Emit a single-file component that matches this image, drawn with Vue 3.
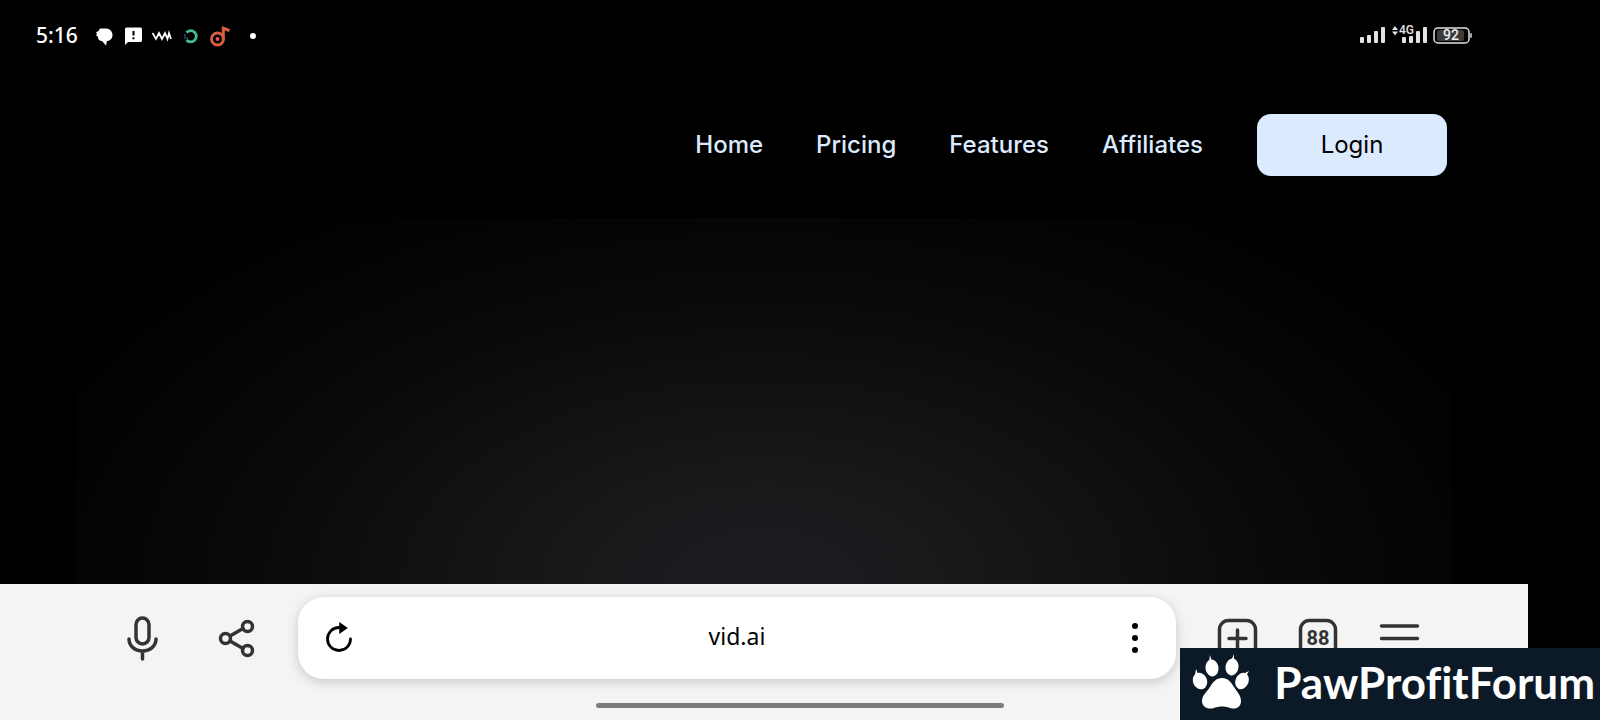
<template>
    <div class="page">
        <div class="status">
            <div class="status-left">
                <span class="clock">5:16</span>
                <svg width="20" height="22" viewBox="0 0 20 22">
                    <path d="M6 3.500h6c4 0 6.500 3 6.500 6.500 0 3.500-2.500 6-5.500 6l-1 4.500-4-4.500c-3 0-4-2-4-4l-2-2 1-1-1-2 2-.5z" fill="#fff" />
                </svg>
                <svg width="20" height="22" viewBox="0 0 20 22">
                    <path d="M3.500 2.500h14q1.500 0 1.500 1.500v11.500q0 1.500-1.500 1.500H5l-3 3V4Q2 2.500 3.500 2.500z" fill="#fff" />
                    <path d="M10.500 6v4.500M10.500 12.200v2" stroke="#111" stroke-width="2.200" />
                </svg>
                <svg width="20" height="22" viewBox="0 0 20 22">
                    <path d="M.5 8l3.500 6L7 8l3 6 3-6 2.500 6L17 8l2 6" fill="none" stroke="#fff" stroke-width="1.700" />
                </svg>
                <svg width="20" height="22" viewBox="0 0 20 22">
                    <path d="M5.500 7.500A5.600 5.600 0 1 1 5.500 15" fill="none" stroke="#44b994" stroke-width="2.800" />
                    <path d="M4 9v4h3" fill="none" stroke="#1b2f55" stroke-width="2" />
                </svg>
                <svg width="20" height="22" viewBox="0 0 20 22">
                    <circle cx="7.500" cy="14" r="6" fill="none" stroke="#d95f43" stroke-width="2.800" />
                    <circle cx="7.500" cy="14" r="2" fill="#d95f43" />
                    <path d="M13.300 15V2" fill="none" stroke="#d95f43" stroke-width="3" />
                    <path d="M12 1l5 2 3 1-1 3-3-1-4-1z" fill="#d95f43" />
                </svg>
                <svg width="20" height="22" viewBox="0 0 20 22">
                    <circle cx="14" cy="11" r="3" fill="#fff" />
                </svg>
            </div>
            <div class="status-right">
                <svg width="26" height="22" viewBox="0 0 26 22">
                    <g fill="#e2e2e2">
                        <rect v-for="(h, i) in bars" :key="i" :x="1 + i * 7" :y="18 - h" width="4" :height="h" rx="1" />
                    </g>
                </svg>
                <svg width="36" height="26" viewBox="0 0 36 26">
                    <g fill="#e2e2e2">
                        <path d="M1 7l3-4 3 4zM1 8.500l3 4 3-4z" />
                        <rect v-for="(h, i) in bars4g" :key="i" :x="11 + i * 7" :y="20 - h" width="4" :height="h" rx="1" />
                        <text x="8" y="11" class="net">4G</text>
                    </g>
                </svg>
                <svg width="39" height="22" viewBox="0 0 39 22">
                    <rect x="1" y="3" width="35" height="15" rx="4" fill="none" stroke="#e2e2e2" stroke-width="1.500" />
                    <rect x="4" y="5" width="27" height="11" rx="2" fill="#3b3b3b" />
                    <rect x="37" y="8" width="2" height="5" rx="1" fill="#aaa" />
                    <text x="18" y="15" text-anchor="middle" class="charge">92</text>
                </svg>
            </div>
        </div>

        <header class="header">
            <nav class="nav">
                <a v-for="link in links" :key="link" href="#">{{ link }}</a>
            </nav>
            <button type="button" class="login">Login</button>
        </header>

        <main class="hero"></main>

        <div class="toolbar">
            <div class="group left">
                <button type="button" class="icon" aria-label="Voice search">
                    <svg width="48" height="48" viewBox="0 0 48 48">
                        <rect x="18" y="4" width="13" height="26" rx="6.500" />
                        <path d="M11 25c0 7 6 12 13.500 12S38 32 38 25M24.500 37v8" />
                    </svg>
                </button>
                <button type="button" class="icon" aria-label="Share">
                    <svg width="48" height="48" viewBox="0 0 48 48">
                        <circle cx="12.500" cy="24.500" r="5" />
                        <circle cx="34.500" cy="12.500" r="5" />
                        <circle cx="34.500" cy="36.500" r="5" />
                        <path d="M17 22l13-7.500M17 27l13 7.500" />
                    </svg>
                </button>
            </div>
            <div class="address">
                <button type="button" class="icon dark" aria-label="Reload">
                    <svg width="48" height="48" viewBox="0 0 48 48">
                        <path d="M24 13.500A11.500 11.500 0 1 0 35.500 25" stroke-width="2.800" />
                        <path d="M25 9.500v9l6.500-4.500z" class="solid" stroke-width="1.500" />
                    </svg>
                </button>
                <input v-model="url" type="text" aria-label="Address" />
                <button type="button" class="icon dark" aria-label="More">
                    <svg width="48" height="48" viewBox="0 0 48 48">
                        <circle v-for="y in [12, 24, 36]" :key="y" cx="24" :cy="y" r="3" class="dot" />
                    </svg>
                </button>
            </div>
            <div class="group right">
                <button type="button" class="icon" aria-label="New tab">
                    <svg width="48" height="48" viewBox="0 0 48 48">
                        <rect x="6.500" y="6.500" width="36" height="37" rx="9" />
                        <path d="M24.500 16v18M16 24.500h17" />
                    </svg>
                </button>
                <button type="button" class="icon" aria-label="Tabs">
                    <svg width="48" height="48" viewBox="0 0 48 48">
                        <rect x="6.500" y="6.500" width="35" height="37" rx="9" />
                        <text x="24" y="31" text-anchor="middle" class="count">88</text>
                    </svg>
                </button>
                <button type="button" class="icon" aria-label="Menu">
                    <svg width="48" height="48" viewBox="0 0 48 48">
                        <path d="M6.500 12h36M6.500 24.500h36M6.500 37h36" />
                    </svg>
                </button>
            </div>
        </div>

        <div class="handle"></div>

        <div class="brand">
            <svg width="58" height="56" viewBox="0 0 58 56">
                <g fill="#fff">
                    <ellipse cx="8" cy="27" rx="7" ry="8.500" transform="rotate(-20 8 27)" />
                    <ellipse cx="20" cy="14" rx="6.500" ry="8.500" transform="rotate(-8 20 14)" />
                    <ellipse cx="40" cy="13" rx="6.500" ry="8.500" transform="rotate(8 40 13)" />
                    <ellipse cx="50" cy="27" rx="6.500" ry="8.500" transform="rotate(22 50 27)" />
                    <path d="M3 21l1-6 2 5zM17 8l1-7 2 7zM39 7l3-7 0 8zM51 20l6-3-3 5z" />
                    <path d="M30 24c6 0 9 4 12 9s7 8 7 14c0 6-5 9-11 7-5-2-11-2-16 0-6 2-12-1-12-7 0-6 5-9 8-14s6-9 12-9z" />
                </g>
            </svg>
            <span>PawProfitForum</span>
        </div>
    </div>
</template>

<script setup>
import { ref } from 'vue';

const links = ['Home', 'Pricing', 'Features', 'Affiliates'];
const bars = [6, 8, 12, 16];
const bars4g = [6, 7, 12, 16];
const url = ref('vid.ai');
</script>

<style>
body {
    margin: 0;
    background: #000;
}
</style>

<style scoped>
.page {
    position: relative;
    display: flex;
    flex-direction: column;
    box-sizing: border-box;
    min-height: 100vh;
    padding-right: 72px;
    background: #000;
    font-family: Inter, 'Liberation Sans', sans-serif;
    overflow: hidden;
}

svg {
    display: block;
}

.status {
    display: flex;
    justify-content: space-between;
    align-items: center;
    height: 72px;
    padding: 0 56px 0 36px;
}

.status-left {
    display: flex;
    align-items: center;
    gap: 9px;
}

.clock {
    width: 49px;
    padding-bottom: 2px;
    color: #fff;
    font: 500 21px/28px 'Noto Sans', sans-serif;
}

.status-right {
    display: flex;
    align-items: center;
    gap: 6px;
}

.net {
    font: 500 12px Roboto, sans-serif;
    stroke: #000;
    stroke-width: 2px;
    paint-order: stroke;
}

.charge {
    fill: #eee;
    font: 500 14px Roboto, sans-serif;
}

.header {
    display: flex;
    justify-content: flex-end;
    align-items: center;
    gap: 54px;
    height: 62px;
    padding: 42px 81px;
}

.nav {
    display: flex;
    gap: 53px;
}

.nav a {
    color: #dbeafe;
    font-size: 24px;
    font-weight: 500;
    line-height: 32px;
    text-decoration: none;
}

.login {
    width: 190px;
    height: 62px;
    border: 0;
    border-radius: 14px;
    background: #dbeafe;
    color: #000;
    font: 400 24px/32px Inter, sans-serif;
}

.hero {
    flex: 1;
    margin: 0 76px;
    background: radial-gradient(780px 440px at 50% 100%, #1c1d20 0%, #191a1c 20%, #111214 42%, #090a0b 64%, #040505 83%, #010101 100%);
}

.toolbar {
    display: flex;
    align-items: flex-start;
    gap: 37px;
    height: 123px;
    padding: 13px 105px 0 118px;
    background: #f4f4f4;
}

.group {
    display: flex;
    align-items: center;
    height: 82px;
}

.left {
    gap: 47px;
}

.right {
    gap: 33px;
}

.icon {
    flex: none;
    width: 48px;
    height: 48px;
    padding: 0;
    border: 0;
    background: none;
    color: #333;
}

.icon svg {
    fill: none;
    stroke: currentColor;
    stroke-width: 3.5px;
    stroke-linecap: round;
}

.dark {
    color: #000;
}

.icon .solid {
    fill: currentColor;
}

.icon .dot {
    fill: currentColor;
    stroke: none;
}

.icon .count {
    fill: currentColor;
    stroke: none;
    font: 700 20px Roboto, sans-serif;
}

.address {
    display: flex;
    flex: 1;
    align-items: center;
    box-sizing: border-box;
    min-width: 0;
    height: 82px;
    padding: 0 17px;
    border-radius: 26px;
    background: #fff;
    box-shadow: 0 3px 12px rgba(0, 0, 0, 0.18);
}

.address input {
    flex: 1;
    min-width: 0;
    padding: 0 0 4px;
    border: 0;
    outline: 0;
    background: none;
    color: #000;
    font: 400 23px/32px 'Noto Sans', sans-serif;
    text-align: center;
}

.handle {
    position: absolute;
    right: 0;
    bottom: 12px;
    left: 0;
    width: 408px;
    height: 5px;
    margin: 0 auto;
    border-radius: 3px;
    background: #7b7b7b;
}

.brand {
    position: absolute;
    right: 0;
    bottom: 0;
    display: flex;
    align-items: center;
    gap: 24px;
    box-sizing: border-box;
    height: 72px;
    padding: 0 5px 4px 12px;
    background: #0b1a26;
    color: #fff;
    font: 700 44px/56px Lato, sans-serif;
    font-variant-ligatures: none;
}
</style>
